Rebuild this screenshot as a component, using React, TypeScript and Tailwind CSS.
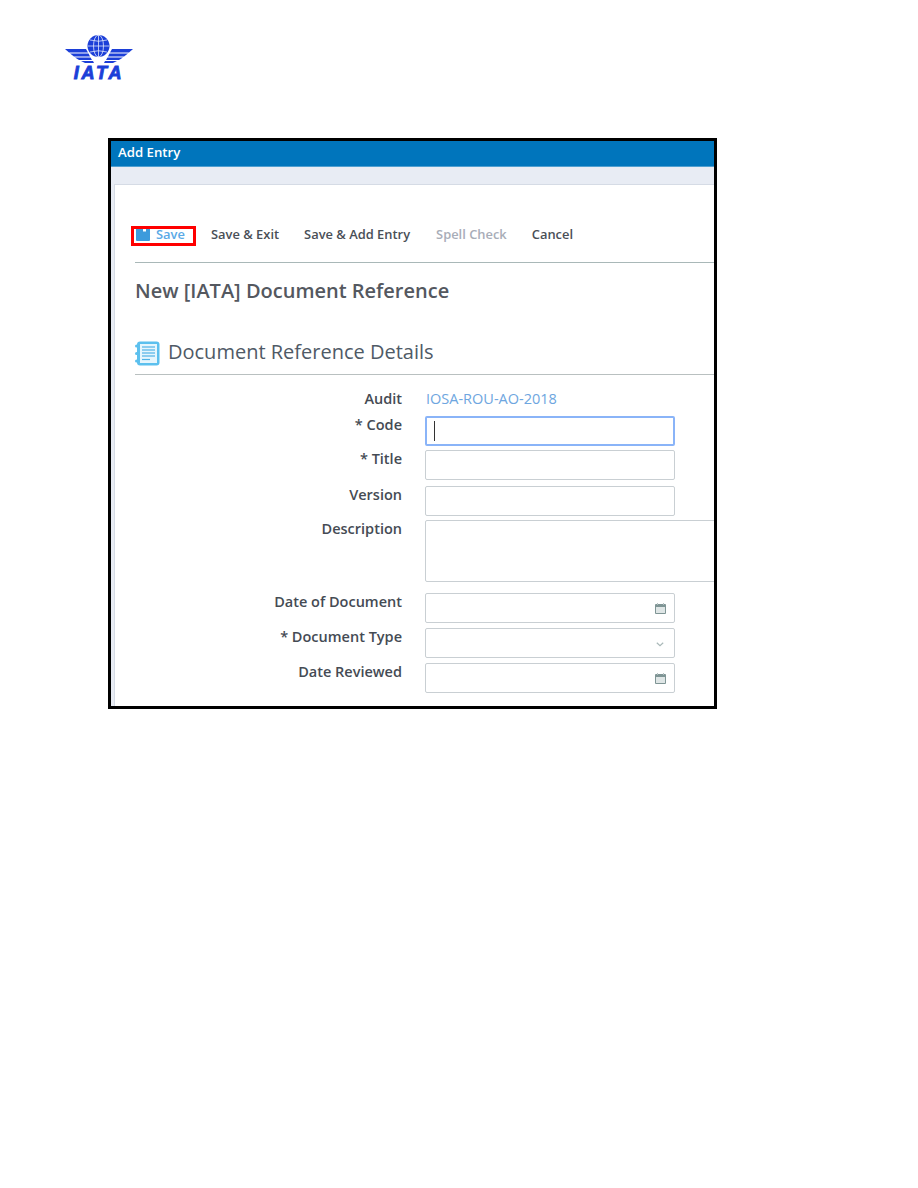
import React from 'react';

// IATA logo: globe, two wings and the letters as real text
const IataLogo: React.FC = () => (
  <svg width="80" height="56" viewBox="0 0 80 56" className="block" aria-label="IATA">
    <circle cx="38.5" cy="16" r="11" fill="#1c3fd8" />
    <g fill="none" stroke="#dfe6fb" strokeWidth="0.8">
      <ellipse cx="38.5" cy="16" rx="5" ry="11" />
      <line x1="38.5" y1="5" x2="38.5" y2="27" />
      <line x1="28" y1="16" x2="49" y2="16" />
      <path d="M30 10 Q38.5 12.5 47 10" />
      <path d="M30 22 Q38.5 19.5 47 22" />
    </g>
    <g fill="#1c3fd8">
      <path d="M5 19 H26 L28 22.5 H9 Z" />
      <path d="M10 23.5 H28.5 L30 26.5 H14 Z" />
      <path d="M15 27.5 H30.5 L32 30 H19 Z" />
      <path d="M21 31 H33 L34 33 H25 Z" />
      <path d="M73 19 H52 L50 22.5 H69 Z" />
      <path d="M68 23.5 H49.5 L48 26.5 H64 Z" />
      <path d="M63 27.5 H47.5 L46 30 H59 Z" />
      <path d="M57 31 H45 L44 33 H53 Z" />
    </g>
    <text
      x="39"
      y="48.5"
      textAnchor="middle"
      fill="#1c3fd8"
      stroke="#1c3fd8"
      strokeWidth="0.9"
      fontFamily="'Liberation Sans', sans-serif"
      fontWeight="700"
      fontStyle="italic"
      fontSize="18"
      letterSpacing="2.8"
    >
      IATA
    </text>
  </svg>
);

const SaveIcon: React.FC = () => (
  <svg width="14" height="12" viewBox="0 0 14 12" className="shrink-0">
    <path d="M0 0 H14 V11 a1 1 0 0 1 -1 1 H1 a1 1 0 0 1 -1 -1 Z" fill="#3d9bdc" />
    <rect x="7" y="0" width="3" height="2.5" fill="#ffffff" />
  </svg>
);

// Notebook icon beside the section heading
const NotebookIcon: React.FC = () => (
  <svg width="25" height="25" viewBox="0 0 25 25" className="shrink-0">
    <rect x="2" y="0.5" width="22.5" height="24" rx="3" fill="#5cc0ee" />
    <rect x="5" y="3" width="17" height="19" fill="#e6f6fd" />
    <g stroke="#4fb3e6" strokeWidth="1.2">
      <line x1="7" y1="6" x2="20" y2="6" />
      <line x1="7" y1="9" x2="20" y2="9" />
      <line x1="7" y1="12" x2="20" y2="12" />
      <line x1="7" y1="15" x2="20" y2="15" />
      <line x1="7" y1="18.5" x2="15" y2="18.5" />
    </g>
    <g fill="#5cc0ee">
      <circle cx="1.5" cy="5" r="1.5" />
      <circle cx="1.5" cy="12.5" r="1.5" />
      <circle cx="1.5" cy="20" r="1.5" />
    </g>
  </svg>
);

const CalendarIcon: React.FC = () => (
  <svg width="11" height="11" viewBox="0 0 11 11" className="block">
    <rect x="0" y="1" width="11" height="10" rx="1" fill="#7f9595" />
    <rect x="1" y="4" width="9" height="6" fill="#dfe6e6" />
    <rect x="2" y="0" width="1" height="2" fill="#b5c2c2" />
    <rect x="8" y="0" width="1" height="2" fill="#b5c2c2" />
  </svg>
);

const ChevronIcon: React.FC = () => (
  <svg width="8" height="5" viewBox="0 0 8 5" className="block">
    <path d="M0.8 0.8 L4 3.6 L7.2 0.8" fill="none" stroke="#a9b8b8" strokeWidth="1.2" />
  </svg>
);

const fieldBox = 'h-[30px] w-[250px] rounded-[2px] border border-[#c9cfd3] bg-white flex items-center justify-end pr-[8px]';

const Field: React.FC<{ label: string; className?: string; children: React.ReactNode }> = ({ label, className, children }) => (
  <div className={`flex items-start ${className ?? ''}`}>
    <div className="w-[267px] shrink-0 text-right text-[14.5px] leading-[18px] font-semibold text-[#454b54]">{label}</div>
    <div className="ml-[23px]">{children}</div>
  </div>
);

export default function App() {
  return (
    <div className="relative min-h-[1188px] bg-white font-['Open_Sans',sans-serif]">
      <div className="pl-[60px] pt-[30px] h-[138px]">
        <IataLogo />
      </div>

      <div className="ml-[108px] h-[571px] w-[609px] overflow-hidden border-[3px] border-black bg-[#e8ecf4]">
        <div className="h-[26px] bg-[#0075bc] border-b border-[#4f9fd0] pl-[7px] text-[13.2px] leading-[22px] font-semibold text-white">
          Add Entry
        </div>

        <div className="ml-[3px] mt-[17px] h-[600px] border-l border-t border-[#d5dbe5] bg-white pl-[20px]">
          {/* Toolbar */}
          <div className="flex items-center h-[78px] border-b border-[#a9b8b8] pt-[22px] text-[12.9px] font-semibold text-[#4a4f57]">
            <div className="-ml-[4px] mt-[3px] flex h-[20px] w-[65px] items-center border-[3px] border-[#ff0000] pb-[3px] pl-[2px] text-[#5aa9e6]">
              <SaveIcon />
              <span className="ml-[6px]">Save</span>
            </div>
            <span className="ml-[15px]">Save &amp; Exit</span>
            <span className="ml-[25px]">Save &amp; Add Entry</span>
            <span className="ml-[26px] text-[#a8adb8]">Spell Check</span>
            <span className="ml-[25px]">Cancel</span>
          </div>

          <h1 className="mt-[14px] text-[20px] leading-[28px] font-semibold text-[#54585f]">New [IATA] Document Reference</h1>

          {/* Section heading */}
          <div className="mt-[36px] flex h-[34px] items-start gap-[8px] border-b border-[#b9c0c0]">
            <NotebookIcon />
            <h2 className="-mt-[1px] text-[20px] leading-[24px] text-[#4f5a66]">Document Reference Details</h2>
          </div>

          {/* Form */}
          <div className="mt-[15px] flex items-start">
            <div className="w-[267px] shrink-0 text-right text-[14.5px] leading-[18px] font-semibold text-[#454b54]">Audit</div>
            <div className="ml-[24px] text-[14.5px] leading-[18px] text-[#6ea6e0]">IOSA-ROU-AO-2018</div>
          </div>

          <Field label="* Code" className="mt-[8px]">
            <div className="relative h-[30px] w-[250px] rounded-[2px] border-2 border-[#8ab4f8] bg-white">
              <div className="absolute left-[7px] top-[3px] h-[20px] w-px bg-[#333333]" />
            </div>
          </Field>
          <Field label="* Title" className="mt-[4px]">
            <div className={fieldBox} />
          </Field>
          <Field label="Version" className="mt-[6px]">
            <div className={fieldBox} />
          </Field>
          <Field label="Description" className="mt-[4px]">
            <div className="h-[62px] w-[320px] rounded-[2px] border border-[#c9cfd3] bg-white" />
          </Field>
          <Field label="Date of Document" className="mt-[11px]">
            <div className={fieldBox}>
              <CalendarIcon />
            </div>
          </Field>
          <Field label="* Document Type" className="mt-[5px]">
            <div className={`${fieldBox} !pr-[10px] pt-[2px]`}>
              <ChevronIcon />
            </div>
          </Field>
          <Field label="Date Reviewed" className="mt-[5px]">
            <div className={fieldBox}>
              <CalendarIcon />
            </div>
          </Field>
        </div>
      </div>
    </div>
  );
}
